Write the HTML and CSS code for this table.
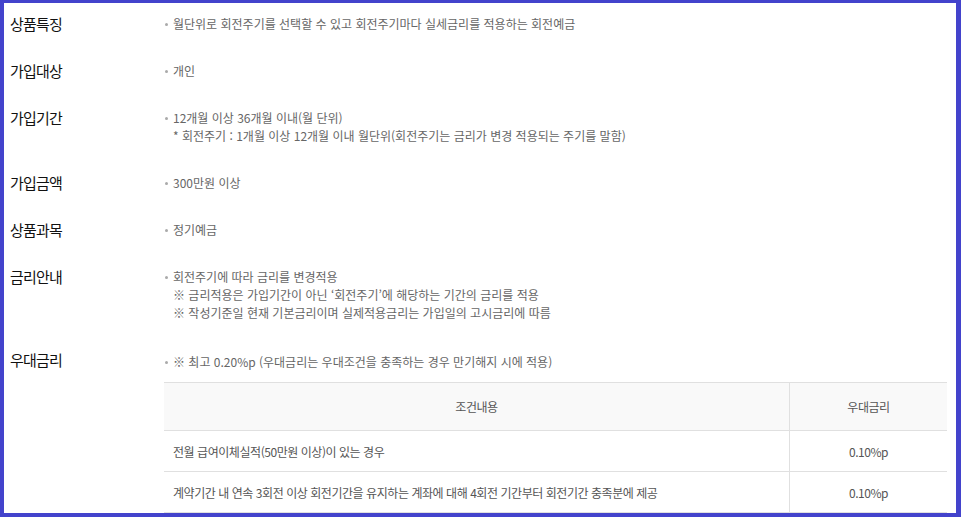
FILE: index.html
```html
<!DOCTYPE html>
<html lang="ko">
<head>
    <meta charset="UTF-8">
    <meta name="viewport" content="width=device-width, initial-scale=1.0">
    <title>회전예금 상품안내</title>
    <link rel="stylesheet" href="styles.css">
</head>
<body>
    <div class="frame">
        <div class="info">
            <div class="row">
                <div class="row-title">상품특징</div>
                <ul class="dot-list">
                    <li>월단위로 회전주기를 선택할 수 있고 회전주기마다 실세금리를 적용하는 회전예금</li>
                </ul>
            </div>
            <div class="row">
                <div class="row-title">가입대상</div>
                <ul class="dot-list">
                    <li>개인</li>
                </ul>
            </div>
            <div class="row">
                <div class="row-title">가입기간</div>
                <ul class="dot-list">
                    <li>12개월 이상 36개월 이내(월 단위)<br/>* 회전주기 : 1개월 이상 12개월 이내 월단위(회전주기는 금리가 변경 적용되는 주기를 말함)</li>
                </ul>
            </div>
            <div class="row">
                <div class="row-title">가입금액</div>
                <ul class="dot-list">
                    <li>300만원 이상</li>
                </ul>
            </div>
            <div class="row">
                <div class="row-title">상품과목</div>
                <ul class="dot-list">
                    <li>정기예금</li>
                </ul>
            </div>
            <div class="row">
                <div class="row-title">금리안내</div>
                <ul class="dot-list">
                    <li>회전주기에 따라 금리를 변경적용<br/>※ 금리적용은 가입기간이 아닌 ‘회전주기’에 해당하는 기간의 금리를 적용<br/>※ 작성기준일 현재 기본금리이며 실제적용금리는 가입일의 고시금리에 따름</li>
                </ul>
            </div>
            <div class="row">
                <div class="row-title">우대금리</div>
                <div class="row-body">
                    <ul class="dot-list extra">
                        <li>※ 최고 0.20%p (우대금리는 우대조건을 충족하는 경우 만기해지 시에 적용)</li>
                    </ul>
                    <table class="rate-table">
                        <thead>
                            <tr>
                                <th>조건내용</th>
                                <th class="col-rate">우대금리</th>
                            </tr>
                        </thead>
                        <tbody>
                            <tr>
                                <td>전월 급여이체실적(50만원 이상)이 있는 경우</td>
                                <td class="col-rate">0.10%p</td>
                            </tr>
                            <tr>
                                <td>계약기간 내 연속 3회전 이상 회전기간을 유지하는 계좌에 대해 4회전 기간부터 회전기간 충족분에 제공</td>
                                <td class="col-rate">0.10%p</td>
                            </tr>
                        </tbody>
                    </table>
                </div>
            </div>
        </div>
    </div>
</body>
</html>
```

FILE: styles.css
```css
html, body {
    margin: 0;
    padding: 0;
    background: #fff;
}
body {
    font-family: "Noto Sans CJK KR", "Noto Sans", sans-serif;
}
.frame {
    box-sizing: border-box;
    height: 100vh;
    overflow: hidden;
    border-style: solid;
    border-color: #4343cc;
    border-width: 3px 5px 4px 4px;
}
.info {
    padding: 12px 9px 0 6px;
}
.row {
    display: flex;
    align-items: flex-start;
    padding-bottom: 29px;
}
.row:last-child {
    padding-bottom: 0;
}
.row-title {
    flex: 0 0 154px;
    font-size: 15px;
    line-height: 18px;
    color: #111;
    letter-spacing: -0.8px;
}
.row-body {
    flex: 1;
}
.dot-list {
    list-style: none;
    margin: 0;
    padding: 0;
    flex: 1;
}
.dot-list li {
    position: relative;
    padding-left: 9px;
    font-size: 12px;
    line-height: 18px;
    color: #666;
}
.dot-list li::before {
    content: "";
    position: absolute;
    left: 1px;
    top: 8px;
    width: 3px;
    height: 3px;
    border-radius: 50%;
    background: #aaa;
}
.dot-list.extra {
    padding-top: 2px;
}
.rate-table {
    width: 100%;
    margin-top: 11px;
    border-collapse: collapse;
    font-size: 12px;
    color: #555;
    letter-spacing: -0.45px;
}
.rate-table th,
.rate-table td {
    border-top: 1px solid #e0e0e0;
    border-bottom: 1px solid #e0e0e0;
    font-weight: normal;
    padding: 0 9px;
}
.rate-table th {
    background: #f9f9f9;
    height: 47px;
}
.rate-table td {
    height: 40px;
    text-align: left;
}
.rate-table .col-rate {
    width: 139px;
    text-align: center;
    border-left: 1px solid #e0e0e0;
}
```
